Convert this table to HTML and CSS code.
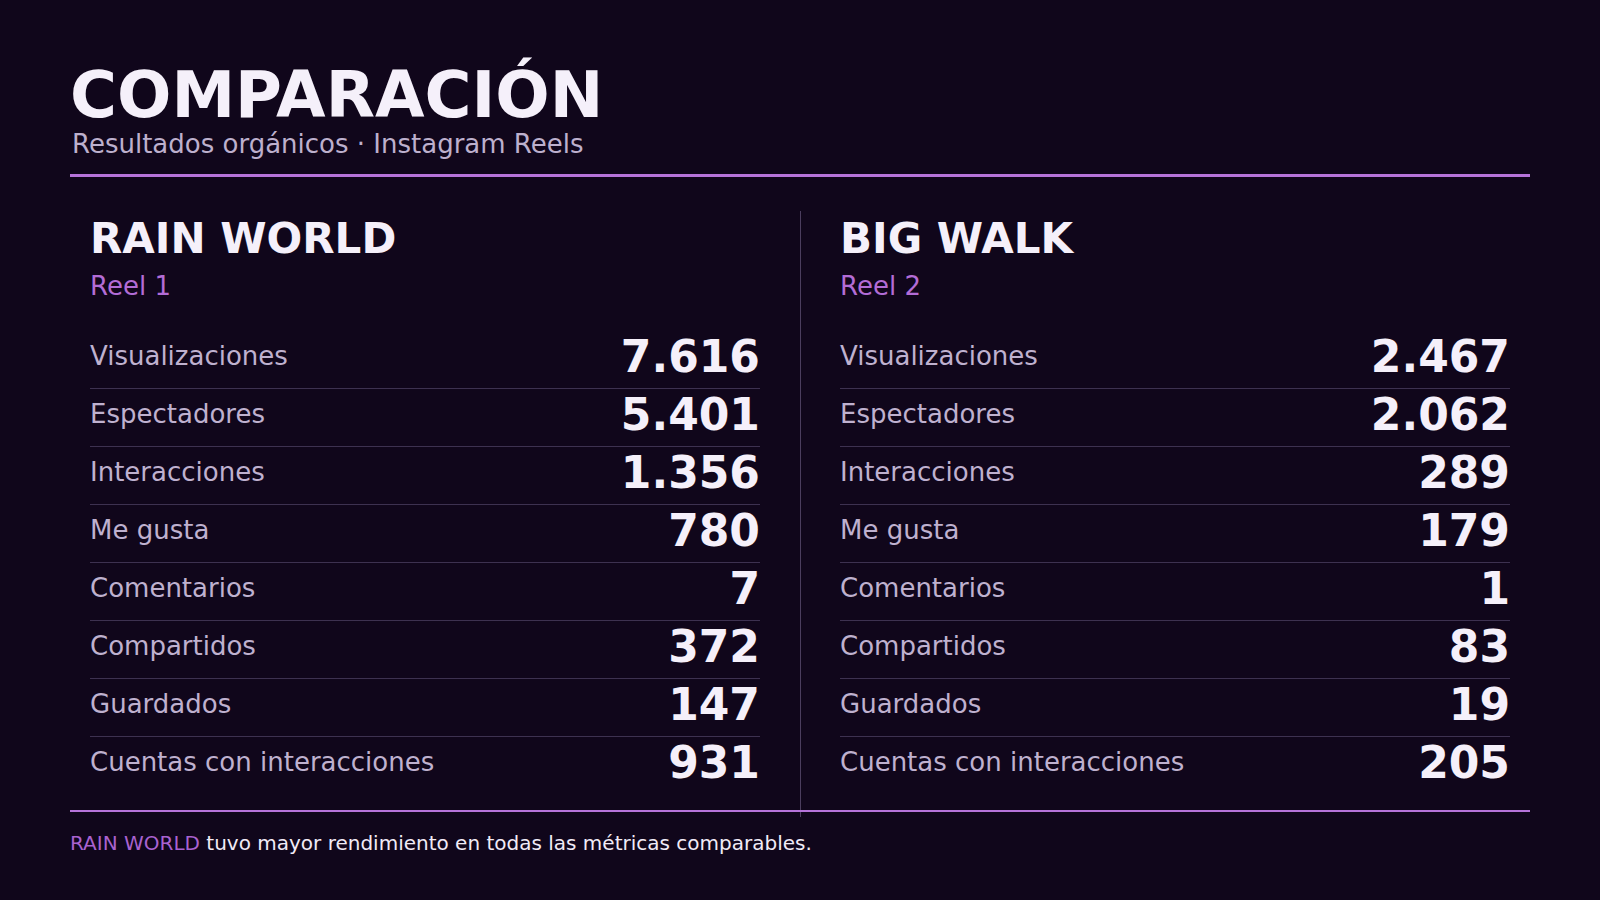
FILE: index.html
```html
<!DOCTYPE html>
<html lang="es">
<head>
<meta charset="utf-8">
<title>Comparación</title>
<link rel="stylesheet" href="styles.css">
</head>
<body>
<div class="page">
  <header class="header">
    <h1 class="title">COMPARACIÓN</h1>
    <p class="subtitle">Resultados orgánicos · Instagram Reels</p>
  </header>
  <div class="rule rule-top"></div>
  <section class="columns">
    <div class="col">
      <h2 class="col-title">RAIN WORLD</h2>
      <p class="col-sub">Reel 1</p>
      <ul class="rows">
        <li class="row"><span class="label">Visualizaciones</span><span class="value">7.616</span></li>
        <li class="row"><span class="label">Espectadores</span><span class="value">5.401</span></li>
        <li class="row"><span class="label">Interacciones</span><span class="value">1.356</span></li>
        <li class="row"><span class="label">Me gusta</span><span class="value">780</span></li>
        <li class="row"><span class="label">Comentarios</span><span class="value">7</span></li>
        <li class="row"><span class="label">Compartidos</span><span class="value">372</span></li>
        <li class="row"><span class="label">Guardados</span><span class="value">147</span></li>
        <li class="row"><span class="label">Cuentas con interacciones</span><span class="value">931</span></li>
      </ul>
    </div>
    <div class="divider"></div>
    <div class="col">
      <h2 class="col-title">BIG WALK</h2>
      <p class="col-sub">Reel 2</p>
      <ul class="rows">
        <li class="row"><span class="label">Visualizaciones</span><span class="value">2.467</span></li>
        <li class="row"><span class="label">Espectadores</span><span class="value">2.062</span></li>
        <li class="row"><span class="label">Interacciones</span><span class="value">289</span></li>
        <li class="row"><span class="label">Me gusta</span><span class="value">179</span></li>
        <li class="row"><span class="label">Comentarios</span><span class="value">1</span></li>
        <li class="row"><span class="label">Compartidos</span><span class="value">83</span></li>
        <li class="row"><span class="label">Guardados</span><span class="value">19</span></li>
        <li class="row"><span class="label">Cuentas con interacciones</span><span class="value">205</span></li>
      </ul>
    </div>
  </section>
  <div class="rule rule-bottom"></div>
  <p class="footer"><span class="accent">RAIN WORLD</span> tuvo mayor rendimiento en todas las métricas comparables.</p>
</div>
</body>
</html>
```
FILE: styles.css
```css
* { box-sizing: border-box; }
html, body {
  margin: 0;
  padding: 0;
  background: #10061b;
}
body {
  width: 1600px;
  height: 900px;
  overflow: hidden;
  font-family: "DejaVu Sans", "Noto Sans", sans-serif;
  color: #f4eefa;
}
.page {
  padding: 63px 70px 0 70px;
}
.title {
  margin: 0;
  font-size: 64px;
  line-height: 64px;
  font-weight: 700;
  color: #f5f0fa;
}
.subtitle {
  margin: 1px 0 0 2px;
  font-size: 26px;
  line-height: 32px;
  color: #bdb0cd;
}
.rule {
  background: #b673da;
}
.rule-top {
  margin-top: 14px;
  height: 3px;
}
.columns {
  margin-top: 34px;
  padding: 0 20px;
  display: grid;
  grid-template-columns: 1fr 1px 1fr;
  column-gap: 39.5px;
}
.divider {
  background: #4b3d5e;
  margin-bottom: -23px;
}
.col {
  padding-top: 3px;
}
.col-title {
  margin: 0;
  font-size: 42px;
  line-height: 50px;
  font-weight: 700;
  color: #f5f0fa;
}
.col-sub {
  margin: 7px 0 0 0;
  font-size: 26px;
  line-height: 30px;
  color: #b36cd6;
}
.rows {
  list-style: none;
  margin: 30px 0 0 0;
  padding: 0;
}
.row {
  display: flex;
  justify-content: space-between;
  align-items: center;
  padding: 4px 0 9px 0;
  border-bottom: 1px solid #3d3150;
}
.row:last-child {
  border-bottom: none;
}
.label {
  font-size: 26px;
  line-height: 30px;
  margin-bottom: 2px;
  color: #bfb1cf;
}
.value {
  font-size: 44px;
  line-height: 44px;
  font-weight: 700;
  color: #f5f0fa;
}
.rule-bottom {
  position: relative;
  margin-top: 16px;
  height: 2px;
}
.footer {
  margin: 19px 0 0 0;
  font-size: 20px;
  line-height: 24px;
  color: #f1ebf7;
}
.accent {
  color: #a962d0;
}
```
